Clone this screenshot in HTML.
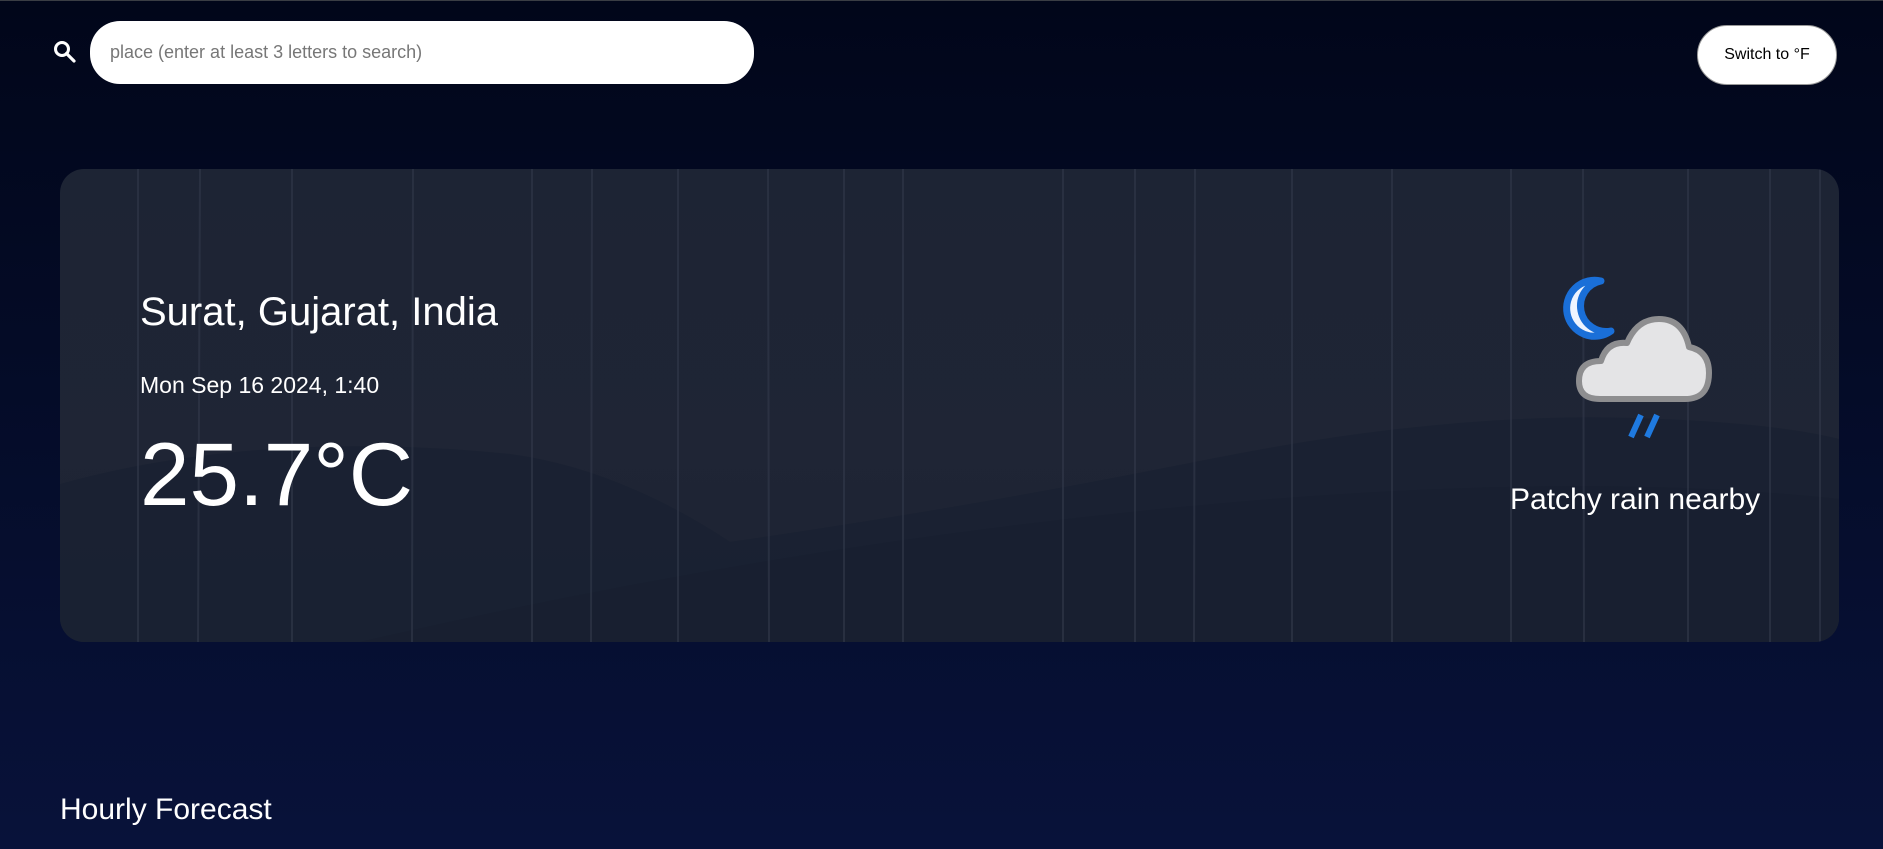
<!DOCTYPE html>
<html><head><meta charset="utf-8"><style>
*{margin:0;padding:0;box-sizing:border-box}
html,body{width:1883px;height:849px;overflow:hidden}
body{background:linear-gradient(180deg,#01061a 0%,#040b26 40%,#08123a 100%);font-family:"Liberation Sans",Arial,sans-serif;color:#fff;position:relative;border-top:1px solid #3a3d44}
.abs{position:absolute;line-height:1;white-space:nowrap}
.input{position:absolute;left:90px;top:20px;width:664px;height:63px;background:#fff;border-radius:30px;color:#777;font-size:18px;line-height:63px;padding-left:20px}
.btn{position:absolute;left:1697px;top:24px;width:140px;height:60px;background:#fff;border:1px solid #999;border-radius:30px;color:#000;font-size:16px;line-height:58px;text-align:center}
.card{position:absolute;left:60px;top:168px;width:1779px;height:473px;border-radius:24px;overflow:hidden;background:linear-gradient(180deg,#1d2434 0%,#1f2535 60%,#1c2232 100%)}
</style></head><body>
<svg class="abs" style="left:52px;top:38px" width="26" height="26" viewBox="0 0 26 26"><circle cx="10" cy="10" r="6.5" fill="none" stroke="#fff" stroke-width="3"/><line x1="14.5" y1="14.5" x2="22" y2="22" stroke="#fff" stroke-width="3.2" stroke-linecap="round"/></svg>
<div class="input">place (enter at least 3 letters to search)</div>
<div class="btn">Switch to °F</div>
<div class="card">
<svg width="1779" height="473" style="position:absolute;left:0;top:0">
<path d="M0 315 Q200 260 450 285 Q560 300 670 373 Q900 340 1150 290 Q1400 240 1600 250 Q1720 255 1779 270 L1779 473 L0 473Z" fill="#1a2132" opacity="0.9"/>
<path d="M300 473 Q700 380 1100 340 Q1500 300 1779 330 L1779 473Z" fill="#181f30" opacity="0.8"/>
<g stroke="#333a4c" stroke-width="2" opacity="0.6">
<line x1="78" y1="0" x2="78" y2="473"/><line x1="140" y1="0" x2="138" y2="473"/><line x1="232" y1="0" x2="232" y2="473"/><line x1="353" y1="0" x2="352" y2="473"/><line x1="472" y1="0" x2="472" y2="473"/><line x1="532" y1="0" x2="531" y2="473"/><line x1="618" y1="0" x2="618" y2="473"/><line x1="708" y1="0" x2="709" y2="473"/><line x1="784" y1="0" x2="784" y2="473"/><line x1="843" y1="0" x2="843" y2="473"/><line x1="1003" y1="0" x2="1003" y2="473"/><line x1="1075" y1="0" x2="1075" y2="473"/><line x1="1135" y1="0" x2="1134" y2="473"/><line x1="1232" y1="0" x2="1232" y2="473"/><line x1="1332" y1="0" x2="1332" y2="473"/><line x1="1451" y1="0" x2="1451" y2="473"/><line x1="1523" y1="0" x2="1524" y2="473"/><line x1="1628" y1="0" x2="1628" y2="473"/><line x1="1710" y1="0" x2="1710" y2="473"/><line x1="1760" y1="0" x2="1760" y2="473"/>
</g></svg>
<div class="abs" style="left:80px;top:123px;font-size:40px">Surat, Gujarat, India</div>
<div class="abs" style="left:80px;top:205px;font-size:23px">Mon Sep 16 2024, 1:40</div>
<div class="abs" style="left:80px;top:261px;font-size:89px">25.7°C</div>
<svg class="abs" style="left:1495px;top:100px" width="180" height="180" viewBox="0 0 180 180">
<path d="M46 12 A28 28 0 1 0 56 62 A20 20 0 1 1 46 12Z" fill="#eef4ff" stroke="#1a6fd8" stroke-width="7" stroke-linejoin="round"/>
<path d="M45 130 Q24 130 24 112 Q24 92 46 92 Q52 72 72 74 Q82 50 104 50 Q128 50 134 78 Q154 82 154 104 Q154 130 130 130 Z" fill="#e4e4e6" stroke="#8e8e90" stroke-width="6" stroke-linejoin="round"/>
<line x1="76" y1="168" x2="86" y2="146" stroke="#1f7ae0" stroke-width="6"/><line x1="92" y1="168" x2="102" y2="146" stroke="#1f7ae0" stroke-width="6"/>
</svg>
<div class="abs" style="left:1450px;top:316px;font-size:30px">Patchy rain nearby</div>
</div>
<div class="abs" style="left:60px;top:794px;font-size:30px">Hourly Forecast</div>
</body></html>
